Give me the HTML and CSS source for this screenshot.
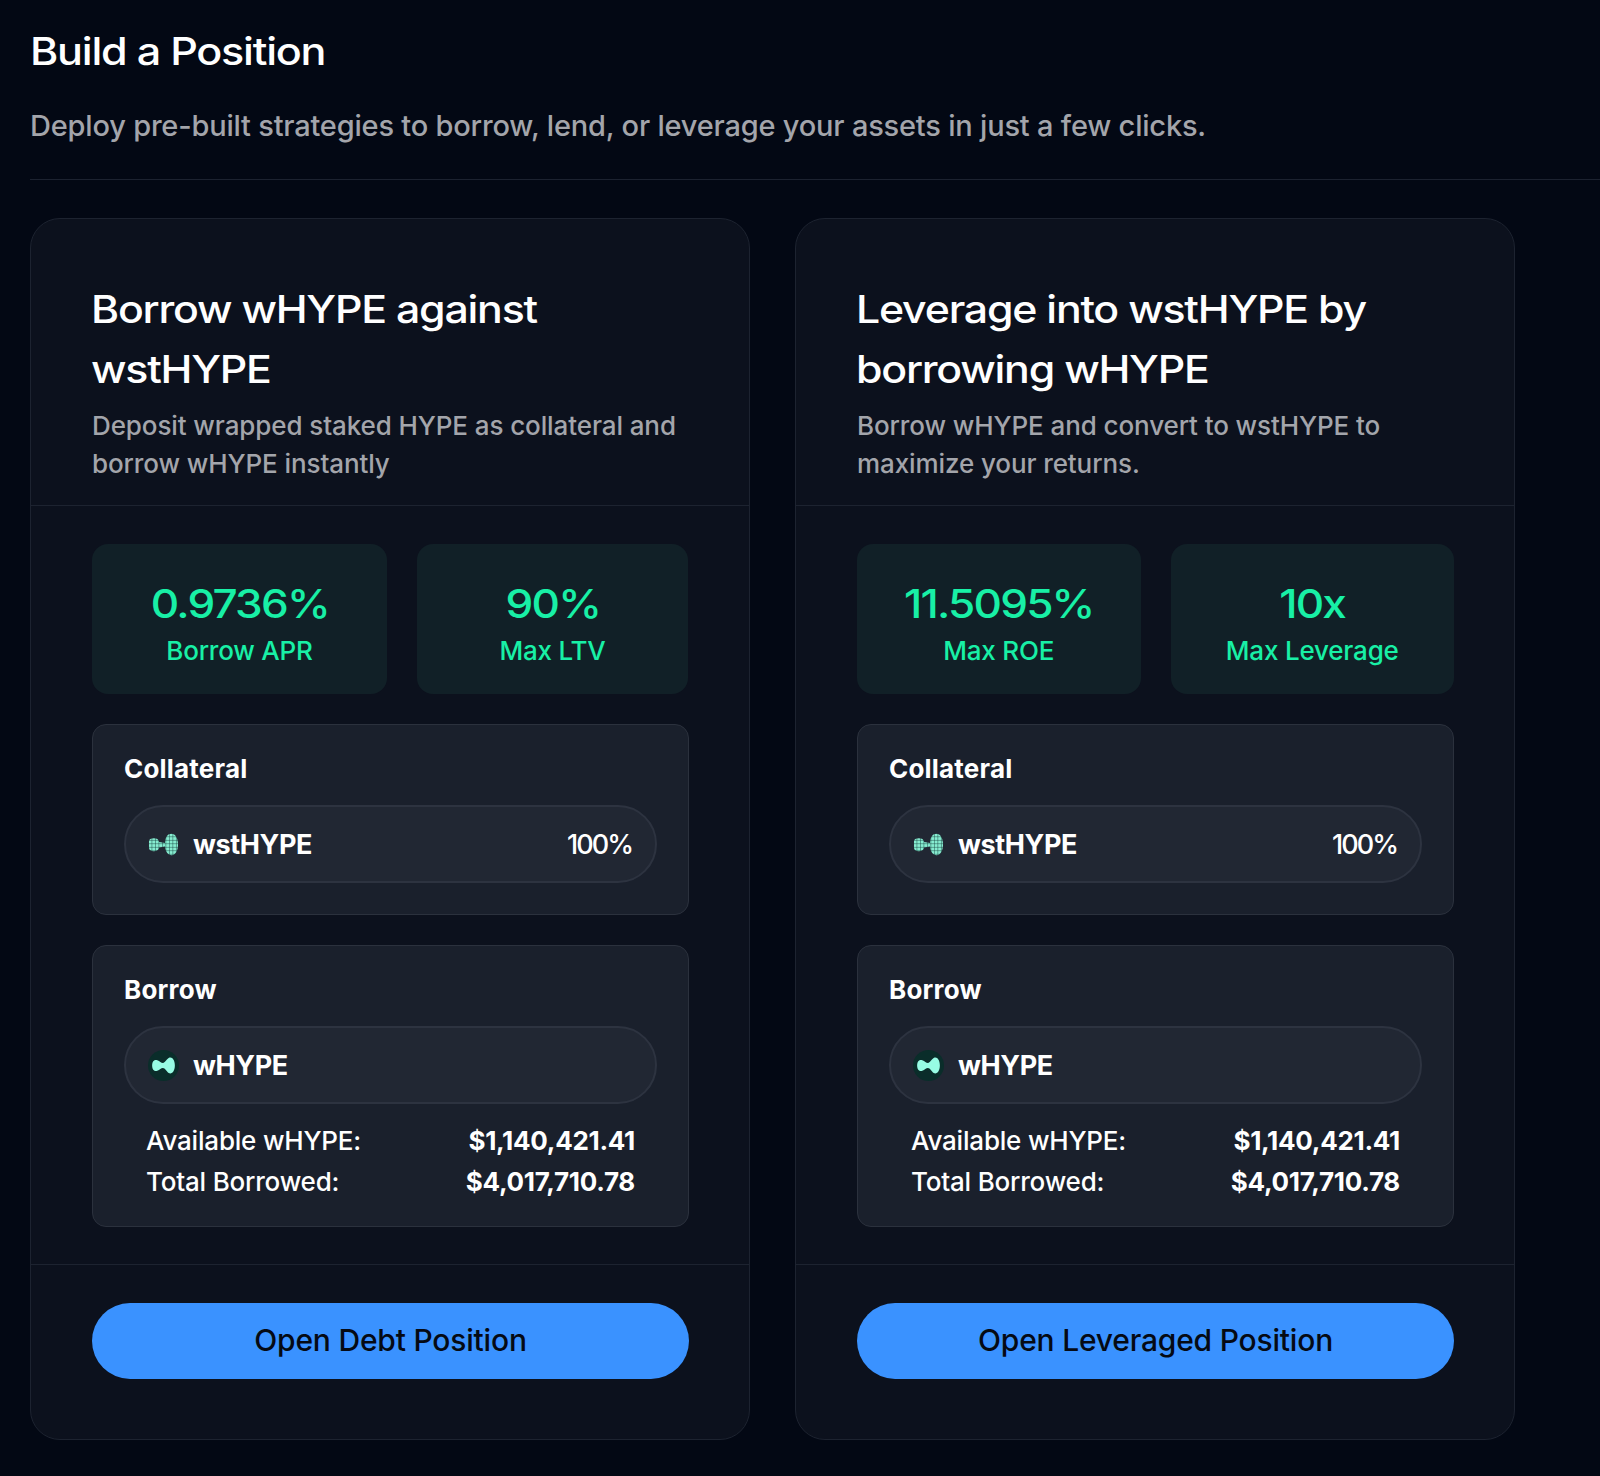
FILE: index.html

```html
<!DOCTYPE html>
<html>
<head>
  <title>Build a Position</title>
  <link rel="stylesheet" href="styles.css">
</head>
<body>
  <svg class="defs" width="0" height="0">
    <defs>
      <pattern id="mesh" width="3.6" height="3.6" patternUnits="userSpaceOnUse">
        <rect width="3.6" height="3.6" fill="#86ecd0"/>
        <path d="M0 0H3.6M0 0V3.6" stroke="#123c3a" stroke-width="0.9"/>
      </pattern>
      <symbol id="wst" viewBox="0 0 32 24">
        <path d="M1 9C1 6.500 3 5.500 6 5.500C9 5.500 11 6.500 11.500 9.500L17.500 10.500C18 4 20.500 1 24 1C28.500 1 31 6 31 12C31 18 28.500 23 24.500 23C20.500 23 18 19 17.500 14L11.500 15C11 17.500 9 19 6 19C3 19 1 17.500 1 15Z" fill="url(#mesh)"/>
      </symbol>
      <symbol id="whype" viewBox="0 0 30 30">
        <circle cx="15" cy="15" r="15" fill="#0a2d2a"/>
        <path d="M4 15C4 10.500 6.500 9 9 9.800C11.500 10.600 12.500 12.500 14.500 12.500C16.500 12.500 17.500 9.500 20 7.800C23 6 26 9.500 26 15C26 20.500 23 24 20 22.200C17.500 20.500 16.500 17.500 14.500 17.500C12.500 17.500 11.500 19.400 9 20.200C6.500 21 4 19.500 4 15Z" fill="#97fce4"/>
      </symbol>
    </defs>
  </svg>

  <header class="page-head">
    <h1>Build a Position</h1>
    <p>Deploy pre-built strategies to borrow, lend, or leverage your assets in just a few clicks.</p>
  </header>

  <main class="cards">
    <section class="card">
      <div class="card-head">
        <h2>Borrow wHYPE against wstHYPE</h2>
        <p>Deposit wrapped staked HYPE as collateral and borrow wHYPE instantly</p>
      </div>
      <div class="card-body">
        <div class="stats stats-debt">
          <div class="stat"><strong>0.9736%</strong><span>Borrow APR</span></div>
          <div class="stat"><strong>90%</strong><span>Max LTV</span></div>
        </div>
        <div class="box">
          <h3>Collateral</h3>
          <div class="token">
            <svg class="icon-wst"><use href="#wst"/></svg>
            <b>wstHYPE</b>
            <span class="share">100%</span>
          </div>
        </div>
        <div class="box box-borrow">
          <h3>Borrow</h3>
          <div class="token">
            <svg class="icon-whype"><use href="#whype"/></svg>
            <b>wHYPE</b>
          </div>
          <div class="info">
            <div class="info-row"><span>Available wHYPE:</span><b>$1,140,421.41</b></div>
            <div class="info-row"><span>Total Borrowed:</span><b>$4,017,710.78</b></div>
          </div>
        </div>
      </div>
      <div class="card-foot">
        <button>Open Debt Position</button>
      </div>
    </section>

    <section class="card">
      <div class="card-head">
        <h2>Leverage into wstHYPE by borrowing wHYPE</h2>
        <p>Borrow wHYPE and convert to wstHYPE to maximize your returns.</p>
      </div>
      <div class="card-body">
        <div class="stats">
          <div class="stat"><strong>11.5095%</strong><span>Max ROE</span></div>
          <div class="stat"><strong>10x</strong><span>Max Leverage</span></div>
        </div>
        <div class="box">
          <h3>Collateral</h3>
          <div class="token">
            <svg class="icon-wst"><use href="#wst"/></svg>
            <b>wstHYPE</b>
            <span class="share">100%</span>
          </div>
        </div>
        <div class="box box-borrow">
          <h3>Borrow</h3>
          <div class="token">
            <svg class="icon-whype"><use href="#whype"/></svg>
            <b>wHYPE</b>
          </div>
          <div class="info">
            <div class="info-row"><span>Available wHYPE:</span><b>$1,140,421.41</b></div>
            <div class="info-row"><span>Total Borrowed:</span><b>$4,017,710.78</b></div>
          </div>
        </div>
      </div>
      <div class="card-foot">
        <button>Open Leveraged Position</button>
      </div>
    </section>
  </main>
</body>
</html>
```

FILE: styles.css

```css
* {
  box-sizing: border-box;
}

body {
  margin: 0;
  padding-left: 30px;
  background-color: #030814;
  color: #fff;
  font-family: Inter, "Liberation Sans", sans-serif;
}

.defs {
  position: absolute;
}

.page-head {
  height: 180px;
  padding-top: 28px;
  border-bottom: 1px solid #1c2230;
}

/* headings use a wide face in the design, Inter is stretched to get there */
h1 {
  width: fit-content;
  margin: 0;
  font-size: 38px;
  line-height: 46px;
  font-weight: 500;
  letter-spacing: -1.1px;
  transform: scaleX(1.135);
  transform-origin: left;
}

.page-head p {
  margin: 29px 0 0;
  font-size: 29px;
  line-height: 46px;
  font-weight: 500;
  color: #a3a5ab;
  letter-spacing: -0.2px;
}

.cards {
  display: flex;
  gap: 45px;
  margin-top: 38px;
}

.card {
  width: 720px;
  height: 1222px;
  background-color: #0c111d;
  border: 1px solid #1d2330;
  border-radius: 30px;
}

.card-head {
  height: 287px;
  padding: 60px 60px 0 61px;
  border-bottom: 1px solid #1d2330;
}

h2 {
  width: 520px;
  margin: 0 0 0 -1px;
  font-size: 38px;
  line-height: 60px;
  font-weight: 500;
  letter-spacing: -1.1px;
  transform: scaleX(1.128);
  transform-origin: left;
}

.card-head p {
  margin: 8px 0 0;
  font-size: 26px;
  line-height: 37.5px;
  font-weight: 500;
  color: #a3a5ab;
  letter-spacing: -0.1px;
}

.card-body {
  display: flex;
  flex-direction: column;
  gap: 30px;
  height: 759px;
  padding: 38px 60px 0 61px;
  border-bottom: 1px solid #1d2330;
}

.stats {
  display: grid;
  grid-template-columns: 1fr 1fr;
  gap: 30px;
}

.stats-debt {
  grid-template-columns: 295px 271px;
}

.stat {
  display: flex;
  flex-direction: column;
  align-items: center;
  height: 150px;
  padding-top: 33px;
  background-color: #112027;
  border-radius: 16px;
  color: #18f0a6;
}

.stat strong {
  font-size: 39px;
  line-height: 54px;
  font-weight: 500;
  letter-spacing: -1.6px;
  transform: scaleX(1.13);
}

.stat span {
  margin-top: 4px;
  font-size: 26px;
  line-height: 32px;
  font-weight: 500;
  letter-spacing: -0.2px;
}

.box {
  height: 191px;
  padding: 26px 31px 0;
  background-color: #1a202c;
  border: 1px solid #2b313d;
  border-radius: 14px;
}

.box-borrow {
  height: 282px;
}

h3 {
  margin: 0 0 18px;
  font-size: 26px;
  line-height: 36px;
  font-weight: 700;
  letter-spacing: 0.2px;
}

.token {
  display: flex;
  align-items: center;
  height: 78px;
  padding: 0 23px 0 22px;
  background-color: #212733;
  border: 2px solid #2d3340;
  border-radius: 39px;
  font-size: 27px;
}

.token svg {
  flex: none;
  width: 31px;
  height: 31px;
  margin-right: 14px;
}

.token b {
  font-weight: 700;
  letter-spacing: -0.4px;
}

.share {
  margin-left: auto;
  font-weight: 500;
  letter-spacing: -2px;
}

.info {
  padding: 16px 22px 0;
  font-size: 26px;
  line-height: 41px;
  font-weight: 500;
  letter-spacing: -0.2px;
}

.info-row {
  display: flex;
  justify-content: space-between;
}

.info-row b {
  font-weight: 700;
  letter-spacing: -0.3px;
}

.card-foot {
  padding: 38px 60px 0 61px;
}

button {
  display: block;
  width: 100%;
  height: 76px;
  padding: 0 0 2px;
  background-color: #3a92ff;
  color: #050a14;
  border: none;
  border-radius: 38px;
  font-family: inherit;
  font-size: 30px;
  font-weight: 500;
  letter-spacing: -0.2px;
  cursor: pointer;
}
```
